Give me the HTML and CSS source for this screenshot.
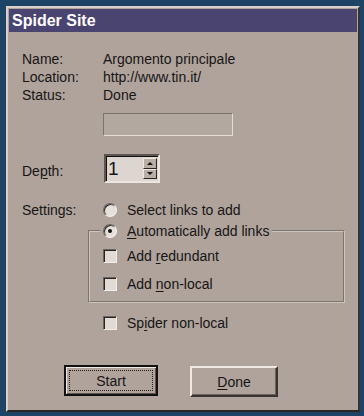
FILE: index.html
```html
<!DOCTYPE html>
<html lang="it">

<head>
    <meta charset="UTF-8">
    <title>Spider Site</title>
    <link rel="stylesheet" href="styles.css">
</head>

<body>
    <div class="dialog">
        <div class="titlebar">Spider Site</div>
        <div class="content">
            <div class="info">
                <span>Name:</span><span>Argomento principale</span>
                <span>Location:</span><span>http://www.tin.it/</span>
                <span>Status:</span><span>Done</span>
            </div>
            <div class="progress"></div>

            <div class="depth-row">
                <div class="lbl depth-lbl">De<u>p</u>th:</div>
                <div class="spin">
                    <span class="spin-value">1</span>
                    <div class="spin-btns">
                        <span class="spin-btn"><i class="arrow up"></i></span>
                        <span class="spin-btn"><i class="arrow down"></i></span>
                    </div>
                </div>
            </div>

            <div class="settings">
                <div class="lbl">Settings:</div>
                <div class="options">
                    <div class="opt"><span class="radio"></span><span>Select links to add</span></div>
                    <fieldset class="group">
                        <legend class="opt"><span class="radio checked"></span><span><u>A</u>utomatically add links</span></legend>
                        <div class="opt"><span class="check"></span><span>Add <u>r</u>edundant</span></div>
                        <div class="opt"><span class="check"></span><span>Add <u>n</u>on-local</span></div>
                    </fieldset>
                    <div class="opt spider"><span class="check"></span><span>Sp<u>i</u>der non-local</span></div>
                </div>
            </div>

            <div class="buttons">
                <button class="btn default"><span class="focus">Start</span></button>
                <button class="btn done"><u>D</u>one</button>
            </div>
        </div>
    </div>
</body>

</html>
```

FILE: styles.css
```css
html,
body {
    margin: 0;
    height: 100%;
}

body {
    background: #1d4466;
    font-family: "Liberation Sans", Arial, sans-serif;
    font-size: 14px;
    color: #171515;
    overflow: hidden;
}

u {
    text-decoration: underline;
    text-underline-offset: 2px;
}

.dialog {
    margin: 6px 0 0 6px;
    width: 354px;
    height: 406px;
    box-sizing: border-box;
    background: #afa39b;
    border: 2px solid;
    border-color: #d9d0ca #3a3431 #2a2523 #d9d0ca;
    padding: 1px;
}

.titlebar {
    height: 23px;
    line-height: 23px;
    background: #4a4470;
    color: #fff;
    font-weight: bold;
    font-size: 16px;
    padding-left: 3px;
}

.content {
    padding-left: 13px;
}

.info {
    display: grid;
    grid-template-columns: 81px 1fr;
    line-height: 18px;
    padding-top: 18px;
}

.progress {
    margin: 9px 0 0 81px;
    width: 130px;
    height: 23px;
    box-sizing: border-box;
    border: 1px solid;
    border-color: #7c726c #e4dcd6 #e4dcd6 #7c726c;
    background: #b3a8a0;
}

.lbl {
    width: 81px;
    line-height: 18px;
    flex-shrink: 0;
}

.depth-row {
    display: flex;
    margin-top: 18px;
}

.depth-lbl {
    padding-top: 8px;
}

.spin {
    display: flex;
    width: 56px;
    height: 29px;
    box-sizing: border-box;
    border: 2px solid;
    border-color: #5d5550 #ece6e1 #ece6e1 #5d5550;
    box-shadow: inset 1px 1px 0 #111;
    background: #ddd5cf;
    margin-left: 1px;
}

.spin-value {
    flex: 1;
    font-size: 19px;
    line-height: 26px;
    padding-left: 2px;
}

.spin-btns {
    display: flex;
    flex-direction: column;
    width: 14px;
    padding: 2px 1px 2px 0;
}

.spin-btn {
    flex: 1;
    display: flex;
    align-items: center;
    justify-content: center;
    background: #b9aea6;
    border: 1px solid;
    border-color: #eee8e3 #2a2523 #2a2523 #eee8e3;
}

.arrow {
    width: 0;
    height: 0;
    border-left: 3px solid transparent;
    border-right: 3px solid transparent;
}

.arrow.up {
    border-bottom: 3px solid #111;
}

.arrow.down {
    border-top: 3px solid #111;
}

.settings {
    display: flex;
    margin-top: 18px;
}

.options {
    display: flex;
    flex-direction: column;
}

.opt {
    display: flex;
    align-items: center;
    height: 18px;
    line-height: 18px;
    white-space: nowrap;
}

.radio,
.check {
    width: 14px;
    height: 14px;
    box-sizing: border-box;
    margin-right: 10px;
    flex-shrink: 0;
}

.radio {
    border-radius: 50%;
    background: #e6e0db;
    border: 1px solid;
    border-color: #6c635e #f6f2ef #f6f2ef #6c635e;
    box-shadow: inset 1px 1px 0 #2a2523;
    display: flex;
    align-items: center;
    justify-content: center;
}

.radio.checked:after {
    content: "";
    width: 4px;
    height: 4px;
    border-radius: 50%;
    background: #111;
}

.check {
    background: #e2dbd5;
    border: 1px solid;
    border-color: #6c635e #f2ede9 #f2ede9 #6c635e;
    box-shadow: inset 1px 1px 0 #2a2523;
}

.group {
    margin: 3px 0 0 -15px;
    width: 257px;
    box-sizing: border-box;
    padding: 7px 0 8px 13px;
    border: 2px groove #cfc5be;
    display: flex;
    flex-direction: column;
    gap: 10px;
}

.group legend {
    padding: 0 3px;
    margin-left: -3px;
}

.spider {
    margin-top: 11px;
}

.buttons {
    display: flex;
    align-items: flex-start;
    margin: 33px 0 0 42px;
}

.btn {
    font-family: inherit;
    font-size: 14px;
    color: #171515;
    background: #afa39b;
    padding: 0;
    box-sizing: border-box;
    border: 2px solid;
    border-color: #f0e9e4 #3a3431 #3a3431 #f0e9e4;
}

.btn.default {
    width: 94px;
    height: 31px;
    border-color: #111;
    box-shadow: inset 1px 1px 0 #f0e9e4, inset -1px -1px 0 #5d5550;
    padding: 3px;
}

.focus {
    display: flex;
    align-items: center;
    justify-content: center;
    height: 100%;
    border: 1px dotted #222;
    box-sizing: border-box;
}

.btn.done {
    width: 88px;
    height: 31px;
    margin: 1px 0 0 32px;
    box-shadow: inset -1px -1px 0 #6c635e;
}
```
